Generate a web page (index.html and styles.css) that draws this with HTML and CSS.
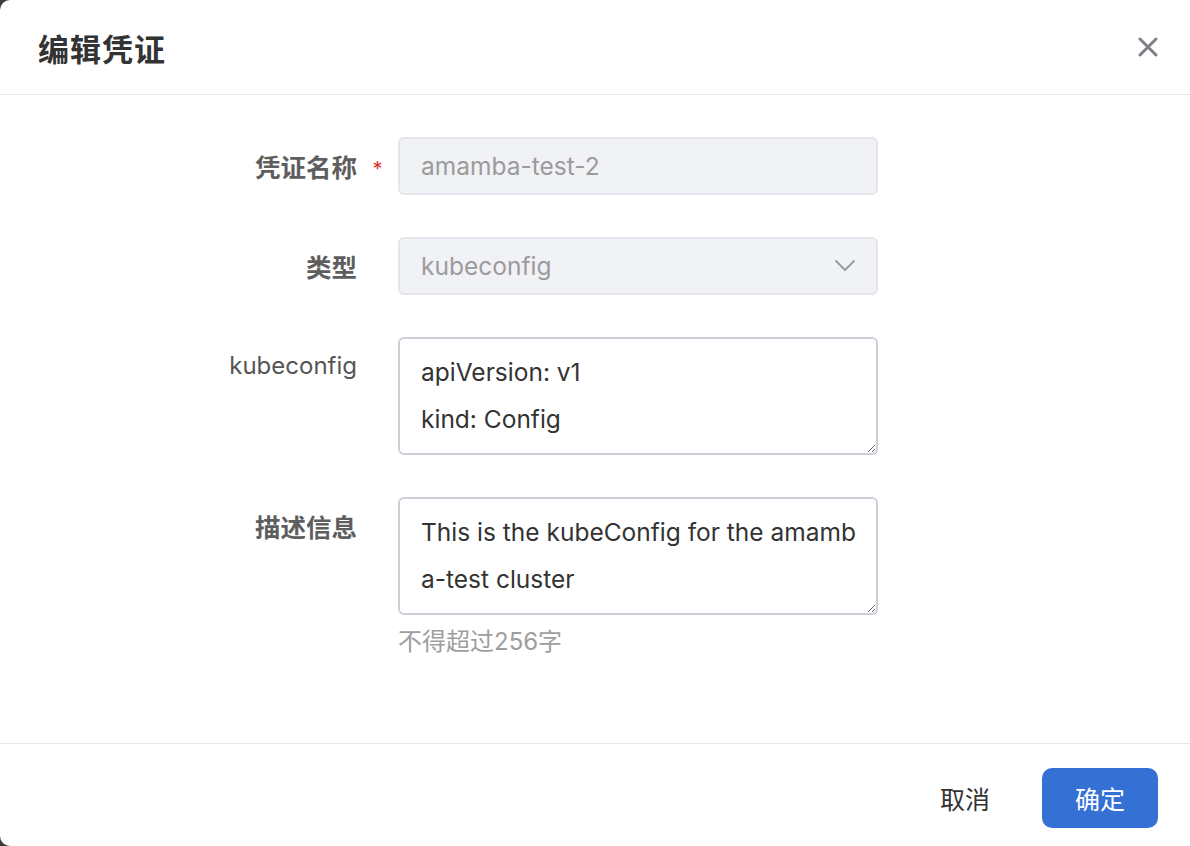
FILE: index.html
```html
<!DOCTYPE html>
<html lang="zh">
<head>
<meta charset="utf-8">
<title>编辑凭证</title>
<link rel="stylesheet" href="styles.css">
</head>
<body>
<div class="modal">
  <div class="modal-header">
    <h1 class="modal-title">编辑凭证</h1>
    <button class="close-btn" aria-label="关闭">
      <svg width="20" height="20" viewBox="0 0 20 20"><path d="M2 2 L18 18 M18 2 L2 18" stroke="#7b7f87" stroke-width="3" stroke-linecap="round" fill="none"/></svg>
    </button>
  </div>
  <div class="modal-body">
    <div class="form-row">
      <label class="form-label">凭证名称</label>
      <span class="req">*</span>
      <div class="control">
        <div class="input disabled">amamba-test-2</div>
      </div>
    </div>
    <div class="form-row">
      <label class="form-label">类型</label>
      <span class="req"></span>
      <div class="control">
        <div class="input disabled select">
          <span>kubeconfig</span>
          <svg class="chevron" width="22" height="14" viewBox="0 0 22 14"><path d="M2 2 L11 11 L20 2" stroke="#9a9da3" stroke-width="2" fill="none" stroke-linecap="round" stroke-linejoin="round"/></svg>
        </div>
      </div>
    </div>
    <div class="form-row">
      <label class="form-label latin">kubeconfig</label>
      <span class="req"></span>
      <div class="control">
        <textarea class="textarea">apiVersion: v1
kind: Config</textarea>
      </div>
    </div>
    <div class="form-row">
      <label class="form-label">描述信息</label>
      <span class="req"></span>
      <div class="control">
        <textarea class="textarea">This is the kubeConfig for the amamba-test cluster</textarea>
        <div class="hint">不得超过256字</div>
      </div>
    </div>
  </div>
  <div class="modal-footer">
    <button class="btn btn-text">取消</button>
    <button class="btn btn-primary">确定</button>
  </div>
</div>
</body>
</html>
```
FILE: styles.css
```css
html, body {
  margin: 0;
  padding: 0;
  background: #3b3b3b;
  height: 100%;
}
body {
  font-family: "Inter", "Noto Sans CJK SC", sans-serif;
  overflow: hidden;
}
.modal {
  background: #ffffff;
  width: 1190px;
  height: 846px;
  border-radius: 10px 0 0 10px;
  display: flex;
  flex-direction: column;
}
.modal-header {
  height: 94px;
  border-bottom: 1px solid #e6e6eb;
  display: flex;
  align-items: center;
  justify-content: space-between;
  padding: 0 32px 0 38px;
}
.modal-title {
  margin: 0;
  font-family: "Noto Sans CJK SC", sans-serif;
  font-size: 31px;
  font-weight: 700;
  color: #333333;
  letter-spacing: 1px;
}
.close-btn {
  background: none;
  border: 0;
  padding: 0;
  width: 20px;
  height: 20px;
  display: flex;
  cursor: pointer;
}
.modal-body {
  flex: 1;
  padding-top: 42px;
  display: flex;
  flex-direction: column;
  gap: 42px;
}
.form-row {
  display: flex;
  align-items: flex-start;
}
.form-label {
  width: 357px;
  text-align: right;
  font-family: "Noto Sans CJK SC", sans-serif;
  font-size: 25.5px;
  font-weight: 700;
  color: #5e5e5e;
  line-height: 58px;
}
.form-label.latin {
  font-family: "Inter", sans-serif;
  font-weight: 400;
  font-size: 24px;
  color: #555555;
}
.req {
  width: 41px;
  text-align: center;
  color: #d9352b;
  font-size: 20px;
  line-height: 58px;
  height: 58px;
  position: relative;
  top: 3px;
}
.control {
  width: 480px;
  display: flex;
  flex-direction: column;
}
.input {
  height: 58px;
  box-sizing: border-box;
  border-radius: 6px;
  border: 2px solid #e4e6eb;
  background: #f1f2f5;
  padding: 0 21px;
  display: flex;
  align-items: center;
  font-size: 24.5px;
  color: #9b9b9b;
}
.select {
  justify-content: space-between;
  padding-right: 20px;
}
.chevron {
  display: block;
}
.textarea {
  display: block;
  width: 480px;
  height: 118px;
  box-sizing: border-box;
  border: 2px solid #cdd0d7;
  border-radius: 6px;
  background: #ffffff;
  padding: 10px 19px 6px 21px;
  margin: 0;
  font-family: "Inter", "Noto Sans CJK SC", sans-serif;
  font-size: 24.5px;
  line-height: 47px;
  color: #333333;
  resize: vertical;
  outline: none;
  word-break: break-all;
  overflow: hidden;
}
.hint {
  margin-top: 12px;
  font-family: "Inter", "Noto Sans CJK SC", sans-serif;
  font-size: 24px;
  color: #9e9e9e;
  line-height: 30px;
}
.modal-footer {
  height: 103px;
  border-top: 1px solid #e6e6eb;
  display: flex;
  align-items: flex-start;
  justify-content: flex-end;
  padding: 24px 32px 0 0;
  box-sizing: border-box;
  gap: 52px;
}
.btn {
  font-family: "Noto Sans CJK SC", sans-serif;
  font-size: 25px;
  height: 60px;
  border: 0;
  cursor: pointer;
}
.btn-text {
  background: none;
  color: #333333;
  padding: 0;
}
.btn-primary {
  width: 116px;
  border-radius: 10px;
  background: #3570d4;
  color: #ffffff;
}
```
